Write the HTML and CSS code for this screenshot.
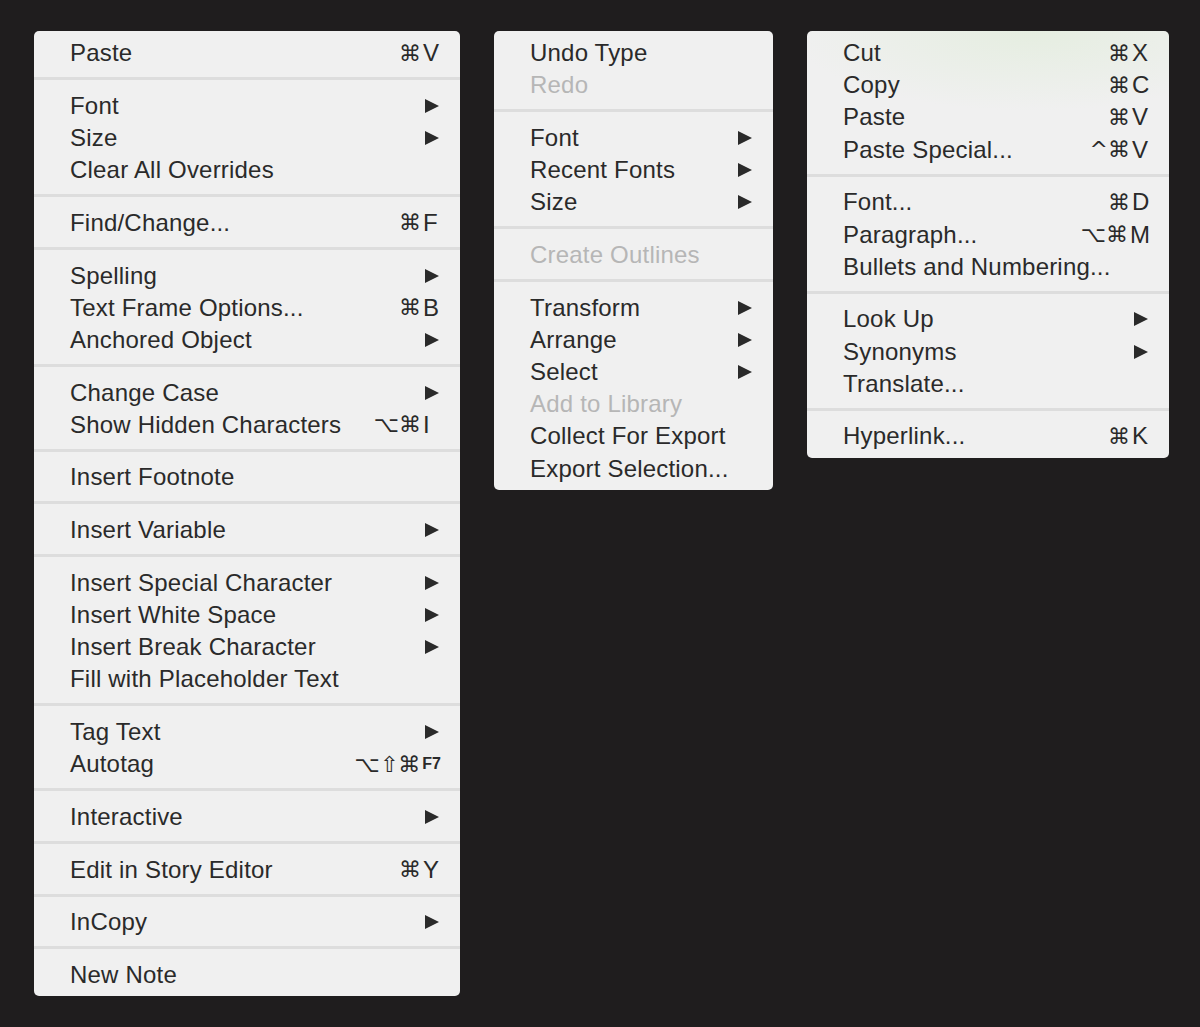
FILE: index.html
```html
<!DOCTYPE html>
<html lang="en">
<head>
<meta charset="UTF-8">
<title>Context Menus</title>
<link rel="stylesheet" href="styles.css">
</head>
<body>
    <div class="desk">
        <div class="menu menu-text">
            <div class="item"><span>Paste</span><span class="keys"><span class="mods">⌘</span><span class="key">V</span></span></div>
            <div class="sep"></div>
            <div class="item"><span>Font</span><span class="arrow"></span></div>
            <div class="item"><span>Size</span><span class="arrow"></span></div>
            <div class="item"><span>Clear All Overrides</span></div>
            <div class="sep"></div>
            <div class="item"><span>Find/Change...</span><span class="keys"><span class="mods">⌘</span><span class="key">F</span></span></div>
            <div class="sep"></div>
            <div class="item"><span>Spelling</span><span class="arrow"></span></div>
            <div class="item"><span>Text Frame Options...</span><span class="keys"><span class="mods">⌘</span><span class="key">B</span></span></div>
            <div class="item"><span>Anchored Object</span><span class="arrow"></span></div>
            <div class="sep"></div>
            <div class="item"><span>Change Case</span><span class="arrow"></span></div>
            <div class="item"><span>Show Hidden Characters</span><span class="keys"><span class="mods">⌥⌘</span><span class="key">I</span></span></div>
            <div class="sep"></div>
            <div class="item"><span>Insert Footnote</span></div>
            <div class="sep"></div>
            <div class="item"><span>Insert Variable</span><span class="arrow"></span></div>
            <div class="sep"></div>
            <div class="item"><span>Insert Special Character</span><span class="arrow"></span></div>
            <div class="item"><span>Insert White Space</span><span class="arrow"></span></div>
            <div class="item"><span>Insert Break Character</span><span class="arrow"></span></div>
            <div class="item"><span>Fill with Placeholder Text</span></div>
            <div class="sep"></div>
            <div class="item"><span>Tag Text</span><span class="arrow"></span></div>
            <div class="item"><span>Autotag</span><span class="keys"><span class="mods">⌥⇧⌘</span><span class="key small">F7</span></span></div>
            <div class="sep"></div>
            <div class="item"><span>Interactive</span><span class="arrow"></span></div>
            <div class="sep"></div>
            <div class="item"><span>Edit in Story Editor</span><span class="keys"><span class="mods">⌘</span><span class="key">Y</span></span></div>
            <div class="sep"></div>
            <div class="item"><span>InCopy</span><span class="arrow"></span></div>
            <div class="sep"></div>
            <div class="item"><span>New Note</span></div>
        </div>

        <div class="menu menu-object">
            <div class="item"><span>Undo Type</span></div>
            <div class="item off"><span>Redo</span></div>
            <div class="sep"></div>
            <div class="item"><span>Font</span><span class="arrow"></span></div>
            <div class="item"><span>Recent Fonts</span><span class="arrow"></span></div>
            <div class="item"><span>Size</span><span class="arrow"></span></div>
            <div class="sep"></div>
            <div class="item off"><span>Create Outlines</span></div>
            <div class="sep"></div>
            <div class="item"><span>Transform</span><span class="arrow"></span></div>
            <div class="item"><span>Arrange</span><span class="arrow"></span></div>
            <div class="item"><span>Select</span><span class="arrow"></span></div>
            <div class="item off"><span>Add to Library</span></div>
            <div class="item"><span>Collect For Export</span></div>
            <div class="item"><span>Export Selection...</span></div>
        </div>

        <div class="menu menu-edit">
            <div class="item"><span>Cut</span><span class="keys"><span class="mods">⌘</span><span class="key">X</span></span></div>
            <div class="item"><span>Copy</span><span class="keys"><span class="mods">⌘</span><span class="key">C</span></span></div>
            <div class="item"><span>Paste</span><span class="keys"><span class="mods">⌘</span><span class="key">V</span></span></div>
            <div class="item"><span>Paste Special...</span><span class="keys"><span class="mods">^⌘</span><span class="key">V</span></span></div>
            <div class="sep"></div>
            <div class="item"><span>Font...</span><span class="keys"><span class="mods">⌘</span><span class="key">D</span></span></div>
            <div class="item"><span>Paragraph...</span><span class="keys"><span class="mods">⌥⌘</span><span class="key">M</span></span></div>
            <div class="item"><span>Bullets and Numbering...</span></div>
            <div class="sep"></div>
            <div class="item"><span>Look Up</span><span class="arrow"></span></div>
            <div class="item"><span>Synonyms</span><span class="arrow"></span></div>
            <div class="item"><span>Translate...</span></div>
            <div class="sep"></div>
            <div class="item"><span>Hyperlink...</span><span class="keys"><span class="mods">⌘</span><span class="key">K</span></span></div>
        </div>
    </div>
</body>
</html>
```

FILE: styles.css
```css
* {
    box-sizing: border-box;
}

body {
    margin: 0;
    background-color: #1f1d1e;
    font-family: "Liberation Sans", "DejaVu Sans", sans-serif;
}

.desk {
    display: flex;
    align-items: flex-start;
    gap: 34px;
    padding: 31px 0 0 34px;
}

.menu {
    background-color: #f0f0f0;
    border-radius: 5px;
    padding: 5px 0 6px 0;
    color: #2a2a2a;
    font-size: 24px;
    letter-spacing: 0.2px;
}
.menu-text {
    width: 426px;
}
.menu-object {
    width: 279px;
}
.menu-edit {
    width: 362px;
    background-image: radial-gradient(ellipse 240px 80px at 62% 0%, rgba(222, 236, 214, 0.6), rgba(240, 240, 240, 0));
}

.item {
    display: flex;
    align-items: center;
    justify-content: space-between;
    height: 32.2px;
    padding: 2px 19px 0 36px;
    white-space: nowrap;
}
.off {
    color: #b6b6b6;
}

.sep {
    height: 3px;
    margin: 8.75px 0;
    background-color: #dddddd;
}

.keys {
    display: flex;
    align-items: center;
    letter-spacing: 0;
}
.mods {
    font-family: "DejaVu Sans", sans-serif;
    font-size: 22px;
}
.key {
    display: inline-block;
    min-width: 18px;
    margin-left: 2px;
}
.small {
    font-size: 16px;
    font-weight: bold;
}

.arrow {
    display: inline-block;
    width: 0;
    height: 0;
    margin-right: 2px;
    border-top: 7.5px solid transparent;
    border-bottom: 7.5px solid transparent;
    border-left: 14px solid #2a2a2a;
}
```
